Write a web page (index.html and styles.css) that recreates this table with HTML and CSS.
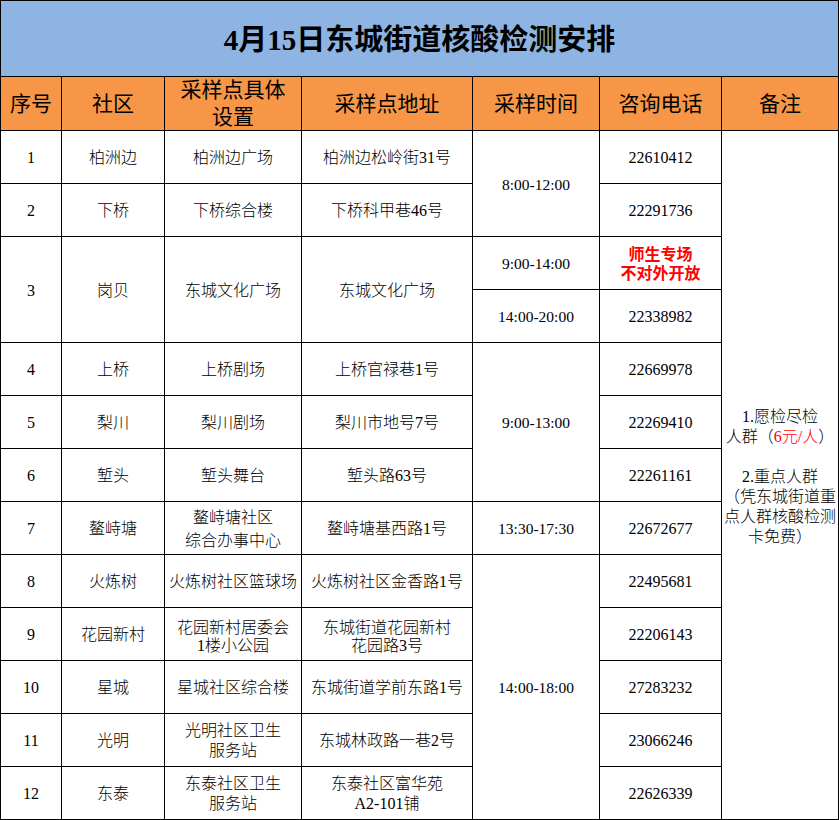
FILE: index.html
```html
<!DOCTYPE html>
<html lang="zh-CN">
<head>
<meta charset="utf-8">
<title>4月15日东城街道核酸检测安排</title>
<link rel="stylesheet" href="styles.css">
</head>
<body>
<div class="sheet">
  <div class="cell title">4月15日东城街道核酸检测安排</div>

  <div class="cell head">序号</div>
  <div class="cell head">社区</div>
  <div class="cell head two">采样点具体<br>设置</div>
  <div class="cell head">采样点地址</div>
  <div class="cell head">采样时间</div>
  <div class="cell head">咨询电话</div>
  <div class="cell head">备注</div>

  <div class="cell">1</div>
  <div class="cell">柏洲边</div>
  <div class="cell">柏洲边广场</div>
  <div class="cell">柏洲边松岭街31号</div>
  <div class="cell time span2">8:00-12:00</div>
  <div class="cell">22610412</div>
  <div class="cell notes">
    <p>1.愿检尽检<br>人群（<span class="red">6元/人</span>）</p>
    <p>2.重点人群<br>（凭东城街道重<br>点人群核酸检测<br>卡免费）</p>
  </div>

  <div class="cell">2</div>
  <div class="cell">下桥</div>
  <div class="cell">下桥综合楼</div>
  <div class="cell">下桥科甲巷46号</div>
  <div class="cell">22291736</div>

  <div class="cell span2">3</div>
  <div class="cell span2">岗贝</div>
  <div class="cell span2">东城文化广场</div>
  <div class="cell span2">东城文化广场</div>
  <div class="cell time">9:00-14:00</div>
  <div class="cell alert">师生专场<br>不对外开放</div>
  <div class="cell time">14:00-20:00</div>
  <div class="cell">22338982</div>

  <div class="cell">4</div>
  <div class="cell">上桥</div>
  <div class="cell">上桥剧场</div>
  <div class="cell">上桥官禄巷1号</div>
  <div class="cell time span3">9:00-13:00</div>
  <div class="cell">22669978</div>

  <div class="cell">5</div>
  <div class="cell">梨川</div>
  <div class="cell">梨川剧场</div>
  <div class="cell">梨川市地号7号</div>
  <div class="cell">22269410</div>

  <div class="cell">6</div>
  <div class="cell">堑头</div>
  <div class="cell">堑头舞台</div>
  <div class="cell">堑头路63号</div>
  <div class="cell">22261161</div>

  <div class="cell">7</div>
  <div class="cell">鳌峙塘</div>
  <div class="cell loose">鳌峙塘社区<br>综合办事中心</div>
  <div class="cell">鳌峙塘基西路1号</div>
  <div class="cell time">13:30-17:30</div>
  <div class="cell">22672677</div>

  <div class="cell">8</div>
  <div class="cell">火炼树</div>
  <div class="cell">火炼树社区篮球场</div>
  <div class="cell">火炼树社区金香路1号</div>
  <div class="cell time span5">14:00-18:00</div>
  <div class="cell">22495681</div>

  <div class="cell">9</div>
  <div class="cell">花园新村</div>
  <div class="cell tight">花园新村居委会<br>1楼小公园</div>
  <div class="cell tight">东城街道花园新村<br>花园路3号</div>
  <div class="cell">22206143</div>

  <div class="cell">10</div>
  <div class="cell">星城</div>
  <div class="cell">星城社区综合楼</div>
  <div class="cell">东城街道学前东路1号</div>
  <div class="cell">27283232</div>

  <div class="cell">11</div>
  <div class="cell">光明</div>
  <div class="cell">光明社区卫生<br>服务站</div>
  <div class="cell">东城林政路一巷2号</div>
  <div class="cell">23066246</div>

  <div class="cell">12</div>
  <div class="cell">东泰</div>
  <div class="cell">东泰社区卫生<br>服务站</div>
  <div class="cell">东泰社区富华苑<br>A2-101铺</div>
  <div class="cell">22626339</div>
</div>
</body>
</html>
```

FILE: styles.css
```css
html, body {
  margin: 0;
  padding: 0;
  background: #ffffff;
}

body {
  font-family: "Liberation Serif", "Noto Sans CJK SC", serif;
  color: #000000;
}

.sheet {
  display: grid;
  grid-template-columns: 60px 102px 136px 170px 126px 121px 116px;
  grid-template-rows: 75px 53px repeat(13, 52px);
  gap: 1px;
  padding: 1px;
  background: #000000;
  width: max-content;
}

.cell {
  background: #ffffff;
  display: flex;
  align-items: center;
  justify-content: center;
  text-align: center;
  font-size: 16px;
  font-weight: 300;
  line-height: 20px;
  white-space: nowrap;
  padding-top: 2px;
  box-sizing: border-box;
}

.title {
  grid-column: 1 / -1;
  background: #8db4e2;
  font-size: 29px;
  font-weight: bold;
  padding-top: 3px;
}

.head {
  background: #f79646;
  font-size: 21px;
  font-weight: 400;
  line-height: 27px;
  padding-top: 1px;
}

.time {
  font-size: 15.5px;
}

.span2 { grid-row: span 2; }
.span3 { grid-row: span 3; }
.span5 { grid-row: span 5; }

.notes {
  grid-row: span 13;
  flex-direction: column;
  gap: 20px;
  padding-top: 4px;
}

.notes p {
  margin: 0;
}

.red {
  color: #ff0000;
}

.alert {
  color: #ff0000;
  font-weight: bold;
  font-size: 16px;
  line-height: 19px;
}

.loose {
  line-height: 23px;
}

.tight {
  line-height: 18px;
  padding-top: 6px;
}
```
